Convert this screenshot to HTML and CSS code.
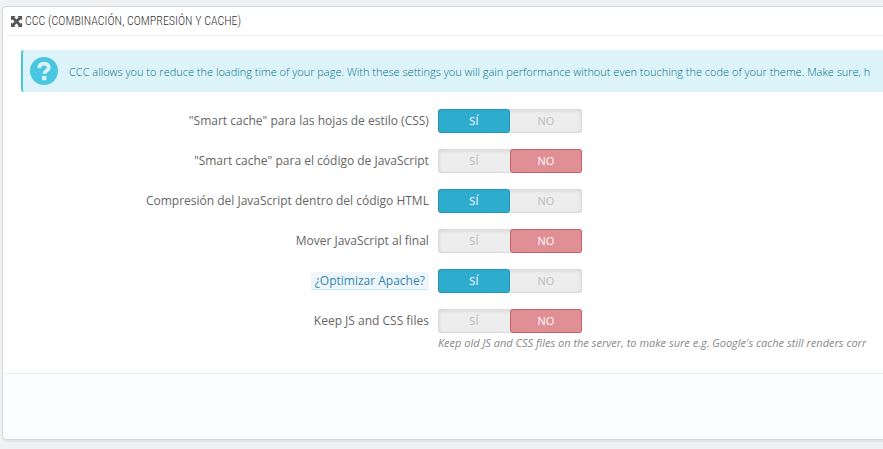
FILE: index.html
```html
<!DOCTYPE html>
<html lang="es">

<head>
  <meta charset="UTF-8">
  <meta name="viewport" content="width=device-width, initial-scale=1.0">
  <title>CCC (Combinación, compresión y cache)</title>
  <link rel="stylesheet" href="styles.css">
</head>

<body>
  <form class="panel">
    <h3 class="panel-heading">
      <svg class="icon-fullscreen" viewBox="0 0 12 12" aria-hidden="true">
        <path d="M0 0h5L3.600 1.400 6 3.900 8.400 1.400 7 0h5v5l-1.400-1.400L8.100 6l2.500 2.400L12 7v5H7l1.400-1.400L6 8.100 3.600 10.600 5 12H0V7l1.400 1.400L3.900 6 1.400 3.600 0 5z"/>
      </svg>
      <span>CCC (COMBINACIÓN, COMPRESIÓN Y CACHE)</span>
    </h3>

    <div class="alert">
      <svg class="icon-help" viewBox="0 0 28 28" aria-hidden="true">
        <circle cx="14" cy="14" r="14" fill="#4ac7e0"/>
        <path d="M9.200 11.200C9.400 8.200 11.200 6.600 14 6.600c2.900 0 4.800 1.600 4.800 3.900 0 3.500-4.400 3.100-4.400 6.300" fill="none" stroke="#dcf4f9" stroke-width="3.800"/>
        <path d="M12 19h4.400v4.200H12z" fill="#dcf4f9"/>
      </svg>
      <p>CCC allows you to reduce the loading time of your page. With these settings you will gain performance without even touching the code of your theme. Make sure, h</p>
    </div>

    <div class="form-wrapper">
      <div class="form-group">
        <span class="control-label" id="css-label">"Smart cache" para las hojas de estilo (CSS)</span>
        <div class="switch" role="radiogroup" aria-labelledby="css-label">
          <input type="radio" name="css" id="css_on" value="1" checked>
          <label for="css_on">SÍ</label>
          <input type="radio" name="css" id="css_off" value="0">
          <label for="css_off">NO</label>
        </div>
      </div>

      <div class="form-group">
        <span class="control-label" id="js-label">"Smart cache" para el código de JavaScript</span>
        <div class="switch" role="radiogroup" aria-labelledby="js-label">
          <input type="radio" name="js" id="js_on" value="1">
          <label for="js_on">SÍ</label>
          <input type="radio" name="js" id="js_off" value="0" checked>
          <label for="js_off">NO</label>
        </div>
      </div>

      <div class="form-group">
        <span class="control-label" id="html-label">Compresión del JavaScript dentro del código HTML</span>
        <div class="switch" role="radiogroup" aria-labelledby="html-label">
          <input type="radio" name="html" id="html_on" value="1" checked>
          <label for="html_on">SÍ</label>
          <input type="radio" name="html" id="html_off" value="0">
          <label for="html_off">NO</label>
        </div>
      </div>

      <div class="form-group">
        <span class="control-label" id="defer-label">Mover JavaScript al final</span>
        <div class="switch" role="radiogroup" aria-labelledby="defer-label">
          <input type="radio" name="defer" id="defer_on" value="1">
          <label for="defer_on">SÍ</label>
          <input type="radio" name="defer" id="defer_off" value="0" checked>
          <label for="defer_off">NO</label>
        </div>
      </div>

      <div class="form-group">
        <span class="control-label" id="apache-label"><span class="label-tooltip">¿Optimizar Apache?</span></span>
        <div class="switch" role="radiogroup" aria-labelledby="apache-label">
          <input type="radio" name="apache" id="apache_on" value="1" checked>
          <label for="apache_on">SÍ</label>
          <input type="radio" name="apache" id="apache_off" value="0">
          <label for="apache_off">NO</label>
        </div>
      </div>

      <div class="form-group">
        <span class="control-label" id="keep-label">Keep JS and CSS files</span>
        <div class="switch" role="radiogroup" aria-labelledby="keep-label" aria-describedby="keep-help">
          <input type="radio" name="keep" id="keep_on" value="1">
          <label for="keep_on">SÍ</label>
          <input type="radio" name="keep" id="keep_off" value="0" checked>
          <label for="keep_off">NO</label>
        </div>
        <p class="help-block" id="keep-help">Keep old JS and CSS files on the server, to make sure e.g. Google's cache still renders corr</p>
      </div>
    </div>

    <div class="panel-footer"></div>
  </form>
</body>

</html>
```

FILE: styles.css
```css
* {
  box-sizing: border-box;
}

body {
  margin: 0;
  padding: 6px 0 9px 2px;
  font-family: 'Open Sans', sans-serif;
  font-size: 11px;
  color: #666;
  background: #eff1f2;
}

.panel {
  border: 1px solid #d3d8db;
  border-right: none;
  border-radius: 5px 0 0 5px;
  background: #fff;
  box-shadow: 0 2px 0 rgba(0, 0, 0, 0.05);
  overflow: hidden;
}

.panel-heading {
  display: flex;
  align-items: center;
  gap: 3px;
  height: 29px;
  margin: 0 0 14px 4px;
  padding-left: 4px;
  border-bottom: 1px solid #eee;
  font-family: 'Ubuntu Condensed', 'Roboto Condensed', 'Open Sans', sans-serif;
  font-size: 12px;
  font-weight: 300;
  color: #333;
  white-space: nowrap;
}

.icon-fullscreen {
  width: 11px;
  height: 11px;
  fill: #555;
}

/* Help message */
.alert {
  display: flex;
  align-items: center;
  gap: 11px;
  height: 42px;
  margin: 0 0 17px 18px;
  padding-left: 7px;
  border-left: 2px solid #4ac7e0;
  border-radius: 3px 0 0 3px;
  background: #dcf4f9;
  color: #00718a;
  overflow: hidden;
  white-space: nowrap;
}

.alert p {
  margin: 0;
  font-weight: 300;
}

.icon-help {
  flex: none;
  width: 28px;
  height: 28px;
}

/* Settings */
.form-wrapper {
  display: flex;
  flex-direction: column;
  gap: 16px;
  padding-bottom: 21px;
}

.form-group {
  display: grid;
  grid-template-columns: 48.400% 1fr;
  column-gap: 9px;
}

.control-label {
  font-size: 12px;
  line-height: 24px;
  text-align: right;
}

.label-tooltip {
  padding: 0 4px;
  border-bottom: 1px solid #c5e9f5;
  border-radius: 3px;
  background: #edf7fb;
  color: #3586ae;
}

.switch {
  position: relative;
  display: flex;
  width: 144px;
  height: 24px;
  border-radius: 3px;
  background: #ededed;
  box-shadow: inset 0 0 0 1px #dcdcdc, inset 0 1px 4px rgba(0, 0, 0, 0.15);
}

.switch input {
  position: absolute;
  opacity: 0;
}

.switch label {
  flex: 1;
  border: 1px solid transparent;
  border-radius: 3px;
  font-size: 11px;
  line-height: 22px;
  text-align: center;
  color: #bbb;
  cursor: pointer;
}

.switch input:checked + label {
  border-color: #2294b3;
  background: #2eacce;
  color: #fff;
  font-weight: 500;
}

.switch input[value="0"]:checked + label {
  border-color: #ca6067;
  background: #e08f95;
}

.help-block {
  grid-column: 2;
  margin: 0;
  padding-top: 1px;
  font-style: italic;
  line-height: 18px;
  color: #888;
  white-space: nowrap;
}

.panel-footer {
  height: 66px;
  border-top: 1px solid #eee;
  background: #fcfdfe;
}
```
